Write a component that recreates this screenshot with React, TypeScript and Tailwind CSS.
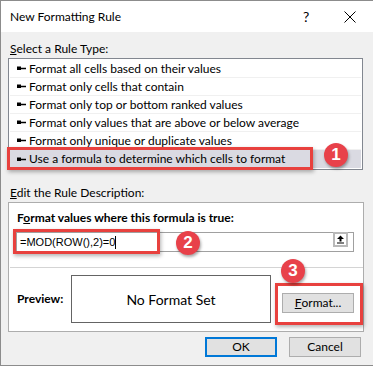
import React from "react";

const rules = [
	"Format all cells based on their values",
	"Format only cells that contain",
	"Format only top or bottom ranked values",
	"Format only values that are above or below average",
	"Format only unique or duplicate values",
	"Use a formula to determine which cells to format",
];

function Pointer() {
	return (
		<svg width="9" height="5" viewBox="0 0 9 5" className="shrink-0">
			<rect x="0" y="0.5" width="4" height="3.5" fill="#000" />
			<rect x="4" y="1.75" width="5" height="1.5" fill="#000" />
		</svg>
	);
}

function Badge({ n, x, y }: { n: number; x: number; y: number }) {
	return (
		<div
			className="absolute w-[24px] h-[24px] rounded-full bg-[#e8414a] text-white text-[17px] font-bold flex items-center justify-center shadow-[1px_2px_3px_rgba(0,0,0,0.35)] font-['Liberation_Sans',sans-serif]"
			style={{ left: x - 12, top: y - 12 }}
		>
			{n}
		</div>
	);
}

function Callout({ x, y, w, h }: { x: number; y: number; w: number; h: number }) {
	return (
		<div
			className="absolute border-[3px] border-[#e8413e] shadow-[1px_2px_4px_rgba(0,0,0,0.3)]"
			style={{ left: x, top: y, width: w, height: h }}
		/>
	);
}

function Button({ children, primary }: { children: React.ReactNode; primary?: boolean }) {
	return (
		<div
			className={`w-[72px] h-[20px] bg-[#e1e1e1] flex items-center justify-center text-[12px] text-black ${
				primary ? "border-2 border-[#0078d7]" : "border border-[#adadad]"
			}`}
		>
			{children}
		</div>
	);
}

export default function App() {
	return (
		<div className="relative w-[373px] h-[366px] bg-[#f0f0f0] border-l border-t border-b border-[#8c8c8c] font-['Lato',sans-serif] text-[12px] text-black overflow-hidden flex flex-col">
			{/* title bar */}
			<div className="h-[31px] bg-white flex items-center pl-[9px] shrink-0">
				<span className="text-[12px] flex-1">New Formatting Rule</span>
				<span className="text-[14px] w-[14px] mr-[27px]">?</span>
				<svg width="12" height="12" viewBox="0 0 12 12" className="mr-[17px]">
					<path d="M0.5 0.5 L11.5 11.5 M11.5 0.5 L0.5 11.5" stroke="#000" strokeWidth="1" />
				</svg>
			</div>

			<div className="px-[7px] flex flex-col">
				<div className="h-[14px] leading-[14px] mt-[10px] pl-[2px]">
					<u>S</u>elect a Rule Type:
				</div>

				{/* rule list */}
				<div className="mt-[2px] w-[355px] h-[112px] bg-white border border-[#828790] p-[1px] flex flex-col">
					{rules.map((r, i) => (
						<div
							key={r}
							className={`flex items-center gap-[3px] pl-[7px] ${
								i === rules.length - 1
									? "h-[20px] bg-[#dadae2]"
									: "h-[18px] border-b border-[#f0f0f0]"
							}`}
						>
							<Pointer />
							<span>{r}</span>
						</div>
					))}
				</div>

				<div className="h-[14px] leading-[14px] mt-[16px] pl-[2px]">
					<u>E</u>dit the Rule Description:
				</div>

				{/* description group */}
				<div className="mt-[2px] w-[356px] h-[130px] bg-white border border-[#adadad] flex flex-col">
					<div className="h-[14px] leading-[14px] mt-[8px] pl-[8px] font-bold">
						F<u>o</u>rmat values where this formula is true:
					</div>
					<div className="mt-[7px] ml-[7px] mr-[9px] h-[20px] border border-[#a0a0a0] flex items-start">
						<div className="flex-1 h-full flex items-center pl-[3px] text-[11px] font-['Liberation_Sans',sans-serif]">
							=MOD(ROW(),2)=0<span className="w-px h-[13px] bg-black" />
						</div>
						<div className="w-[15px] h-[15px] border-2 border-[#b9b9b9] bg-white flex items-center justify-center mr-[5px] -mt-px">
							<svg width="9" height="9" viewBox="0 0 9 9">
								<path d="M4.5 0.5 L8 4 L5.5 4 L5.5 6.5 L3.5 6.5 L3.5 4 L1 4 Z" fill="#000" />
								<rect x="1" y="7.5" width="7" height="1" fill="#000" />
							</svg>
						</div>
					</div>
					<div className="mt-[15px] ml-[1px] h-px bg-[#d4d4d4]" />
					<div className="mt-[7px] flex items-start pl-[8px]">
						<div className="w-[54px] h-[48px] flex items-center font-bold">Preview:</div>
						<div className="w-[200px] h-[48px] border border-[#646464] bg-white flex items-center justify-center text-[14px]">
							No Format Set
						</div>
						<div className="ml-[11px] mt-[18px]">
							<Button>
								<u>F</u>ormat...
							</Button>
						</div>
					</div>
				</div>

				<div className="mt-[5px] flex justify-end gap-[12px] pr-[5px]">
					<Button primary>OK</Button>
					<Button>Cancel</Button>
				</div>
			</div>

			{/* annotations */}
			<Callout x={6} y={146} w={306} h={23} />
			<Callout x={12} y={228} w={147} h={25} />
			<Callout x={274} y={282} w={88} h={42} />
			<Badge n={1} x={335} y={154} />
			<Badge n={2} x={187} y={242} />
			<Badge n={3} x={292} y={270} />
		</div>
	);
}
